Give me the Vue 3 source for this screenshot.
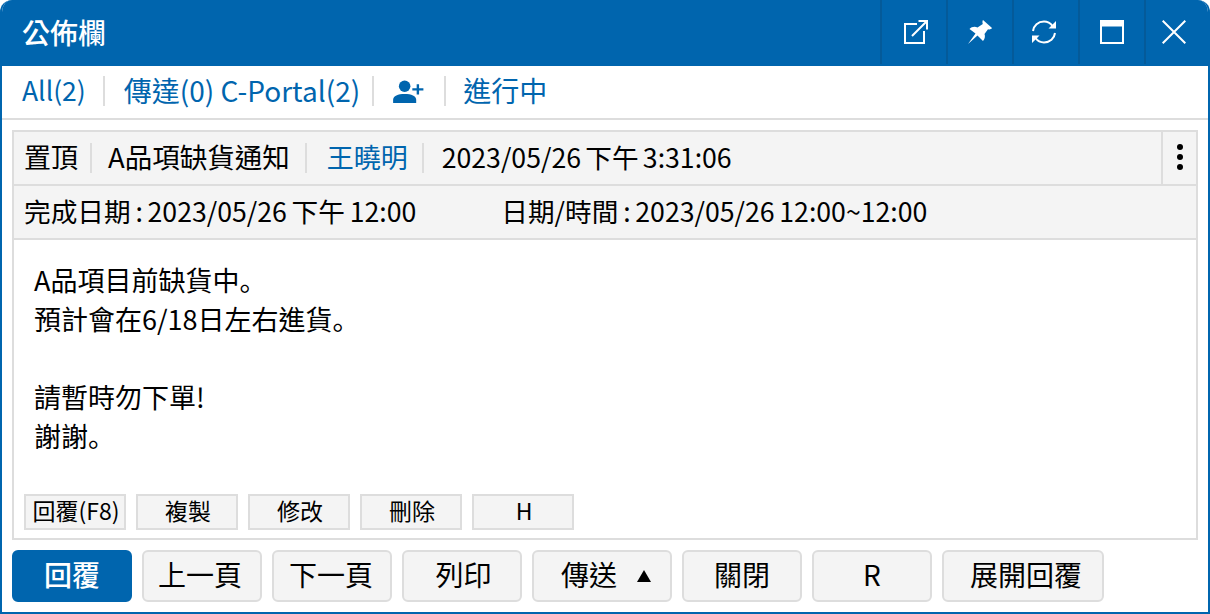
<script setup>
const smallButtons = ["回覆(F8)", "複製", "修改", "刪除", "H"];
// the full stop sits low-left in the reference, so it gets its own span
const bodyLines = [
  { text: "A品項目前缺貨中", stop: true },
  { text: "預計會在6/18日左右進貨", stop: true },
  { text: "", stop: false },
  { text: "請暫時勿下單!", stop: false },
  { text: "謝謝", stop: true },
];
</script>

<template>
  <div class="window">
    <header class="titlebar">
      <div class="title">公佈欄</div>
      <div class="tools">
        <button class="tool popout" type="button" aria-label="popout">
          <svg width="24" height="24" viewBox="0 0 24 24" fill="none" stroke="#fff" stroke-width="2">
            <path d="M13 4H1V23H20V11" />
            <path d="M8 16L22.500 1.500M14.500 1H23V9.500" />
          </svg>
        </button>
        <button class="tool" type="button" aria-label="pin">
          <svg width="24" height="24" viewBox="0 0 24 24" fill="#fff">
            <path d="M15 0L24 8C23 9.500 21.500 9.700 20 9.200L16.500 14C17.500 16.500 16.700 19 15 21L9.500 15.500L0 24L7.500 13.500L1.500 9C3.500 7 6.500 6 9.500 7.500L14.800 4C14.300 2.500 14.300 1 15 0Z" />
          </svg>
        </button>
        <button class="tool refresh" type="button" aria-label="refresh">
          <svg width="24" height="24" viewBox="0 0 24 24" fill="none" stroke="#fff" stroke-width="2">
            <path d="M1 11C1.700 5.500 6 1.500 12 1.500C15.500 1.500 18.500 3.200 20.500 6" />
            <path d="M23 13C22.300 18.500 18 22.500 12 22.500C8.500 22.500 5.500 20.800 3.500 18" />
            <path d="M24 1V8.500H16.500Z M0 23V15.500H7.500Z" fill="#fff" stroke="none" />
          </svg>
        </button>
        <button class="tool" type="button" aria-label="maximize">
          <svg width="24" height="24" viewBox="0 0 24 24" fill="none" stroke="#fff">
            <rect x="1" y="1" width="22" height="22" stroke-width="2" />
            <path d="M0 4H24" stroke-width="5" />
          </svg>
        </button>
        <button class="tool close" type="button" aria-label="close">
          <svg width="24" height="24" viewBox="0 0 24 24" fill="none" stroke="#fff" stroke-width="2">
            <path d="M0.700 0.700L23.300 23.300M23.300 0.700L0.700 23.300" />
          </svg>
        </button>
      </div>
    </header>

    <nav class="tabs">
      <span class="tab all">All(2)</span>
      <span class="sep s1"></span>
      <span class="tab">傳達(0) C-Portal(2)</span>
      <span class="sep s2"></span>
      <svg class="adduser" width="31" height="25" viewBox="0 0 32 26" fill="#0065ae">
        <circle cx="12" cy="7.500" r="6" />
        <path d="M0 25V21.500C0 17.500 5 15.500 12 15.500C19 15.500 24 17.500 24 21.500V25Z" />
        <path d="M24.500 5.500H27V9.500H31.500V12H27V16H24.500V12H20V9.500H24.500Z" />
      </svg>
      <span class="sep s3"></span>
      <span class="tab">進行中</span>
    </nav>

    <main class="main">
      <section class="panel">
        <div class="row first">
          <div class="cells">
            <span class="cell">置頂</span>
            <span class="sep c1"></span>
            <span class="cell subject">A品項缺貨通知</span>
            <span class="sep c2"></span>
            <span class="cell link">王曉明</span>
            <span class="sep c3"></span>
            <span class="cell date">2023/05/26 下午 3:31:06</span>
          </div>
          <button class="more" type="button" aria-label="more">
            <i></i><i></i><i></i>
          </button>
        </div>
        <div class="row second">
          <span>完成日期 : 2023/05/26 下午 12:00</span>
          <span>日期/時間 : 2023/05/26 12:00~12:00</span>
        </div>
        <div class="body">
          <div class="text">
            <div v-for="(line, i) in bodyLines" :key="i" class="line">{{ line.text }}<span v-if="line.stop" class="stop">。</span></div>
          </div>
          <div class="small-actions">
            <button v-for="b in smallButtons" :key="b" class="small" type="button">{{ b }}</button>
          </div>
        </div>
      </section>

      <footer class="actions">
        <button class="btn primary" type="button">回覆</button>
        <button class="btn prev" type="button">上一頁</button>
        <button class="btn next" type="button">下一頁</button>
        <button class="btn print" type="button">列印</button>
        <button class="btn send" type="button">傳送<span class="caret"></span></button>
        <button class="btn" type="button">關閉</button>
        <button class="btn" type="button">R</button>
        <button class="btn wide" type="button">展開回覆</button>
      </footer>
    </main>
  </div>
</template>

<style>
html, body {
  margin: 0;
  background: #fff;
}
</style>

<style scoped>
.window {
  box-sizing: border-box;
  width: 1210px;
  height: 614px;
  display: flex;
  flex-direction: column;
  border: 2px solid #0065ae;
  border-top: 0;
  border-radius: 12px 12px 0 0;
  font-family: "Noto Sans CJK TC", "Noto Sans", sans-serif;
  color: #000;
  overflow: hidden;
}
button {
  font-family: inherit;
  padding: 0;
  margin: 0;
  cursor: pointer;
}
.titlebar {
  height: 66px;
  margin: 0 -2px;
  flex: none;
  display: flex;
  justify-content: space-between;
  background: #0065ae;
}
.title {
  padding-left: 22px;
  font-size: 28px;
  font-weight: 500;
  line-height: 64px;
  color: #fff;
}
.tools {
  display: flex;
  height: 64px;
}
.tool {
  width: 66px;
  height: 64px;
  box-sizing: border-box;
  border: 0;
  border-left: 2px solid #045a99;
  background: none;
  display: flex;
  align-items: center;
  justify-content: center;
}
.popout {
  padding-left: 4px;
}
.refresh {
  padding-right: 5px;
}
.close {
  padding-right: 8px;
}
.tabs {
  height: 54px;
  flex: none;
  box-sizing: border-box;
  padding: 0 0 2px 20px;
  border-bottom: 2px solid #ddd;
  display: flex;
  align-items: center;
  color: #0065ae;
  font-size: 28px;
}
.tab {
  margin-bottom: 3px;
}
.all {
  font-size: 26.5px;
}
.sep {
  width: 2px;
  height: 30px;
  background: #ddd;
  flex: none;
}
.s1 {
  margin: 0 19px 0 17px;
}
.s2 {
  margin: 0 19px 0 12px;
}
.s3 {
  margin: 0 17px 0 20px;
}
.main {
  flex: 1;
  min-height: 0;
  display: flex;
  flex-direction: column;
  padding: 10px;
  gap: 10px;
}
.panel {
  flex: 1;
  min-height: 0;
  display: flex;
  flex-direction: column;
  border: 2px solid #ddd;
}
.row {
  display: flex;
  align-items: center;
  background: #f4f4f4;
  border-bottom: 2px solid #ddd;
  font-size: 26.67px;
  word-spacing: -1.7px;
  flex: none;
  box-sizing: border-box;
}
.first {
  height: 54px;
  justify-content: space-between;
}
.cells {
  display: flex;
  align-items: center;
  padding-left: 10px;
}
.cell {
  margin-bottom: 4px;
  font-size: 27px;
}
.subject {
  font-size: 27.5px;
}
.date {
  font-size: 26.67px;
}
.c1 {
  margin: 0 16px 0 12px;
}
.c2 {
  margin: 0 20px 0 15px;
}
.c3 {
  margin: 0 18px 0 14px;
}
.link {
  color: #0065ae;
}
.more {
  width: 35px;
  height: 52px;
  box-sizing: border-box;
  border: 0;
  border-left: 2px solid #ddd;
  background: none;
  display: flex;
  flex-direction: column;
  align-items: center;
  justify-content: center;
  gap: 4px;
  padding-bottom: 2px;
}
.more i {
  width: 6px;
  height: 6px;
  border-radius: 50%;
  background: #000;
}
.second {
  height: 54px;
  padding: 0 0 4px 10px;
  gap: 85px;
  word-spacing: -1.2px;
}
.body {
  flex: 1;
  min-height: 0;
  display: flex;
  flex-direction: column;
  justify-content: space-between;
  padding: 20px 10px 8px;
}
.text {
  padding-left: 10px;
  font-size: 27px;
}
.line {
  height: 39px;
  line-height: 39px;
}
.stop {
  font-family: "Noto Sans CJK JP", sans-serif;
}
.small-actions {
  display: flex;
  gap: 10px;
}
.small {
  width: 102px;
  height: 36px;
  box-sizing: border-box;
  border: 2px solid #ddd;
  background: #f4f4f4;
  font-size: 23px;
  line-height: 26px;
  padding: 0 0 4px 2px;
  color: #000;
}
.actions {
  flex: none;
  display: flex;
  gap: 10px;
}
.btn {
  width: 120px;
  height: 52px;
  box-sizing: border-box;
  border: 2px solid #ddd;
  border-radius: 6px;
  background: #f4f4f4;
  font-size: 28px;
  color: #000;
  display: flex;
  align-items: center;
  justify-content: center;
  padding-bottom: 4px;
}
.primary {
  background: #0065ae;
  border-color: #0065ae;
  color: #fff;
  font-weight: 500;
}
.prev {
  padding-right: 4px;
}
.next {
  padding-right: 2px;
}
.print {
  padding-left: 3px;
}
.send {
  width: 140px;
  justify-content: flex-start;
  padding-left: 27px;
  gap: 20px;
}
.caret {
  width: 0;
  height: 0;
  margin-top: 4px;
  border-left: 7px solid transparent;
  border-right: 7px solid transparent;
  border-bottom: 12px solid #000;
}
.wide {
  width: 162px;
  padding-left: 6px;
}
</style>
